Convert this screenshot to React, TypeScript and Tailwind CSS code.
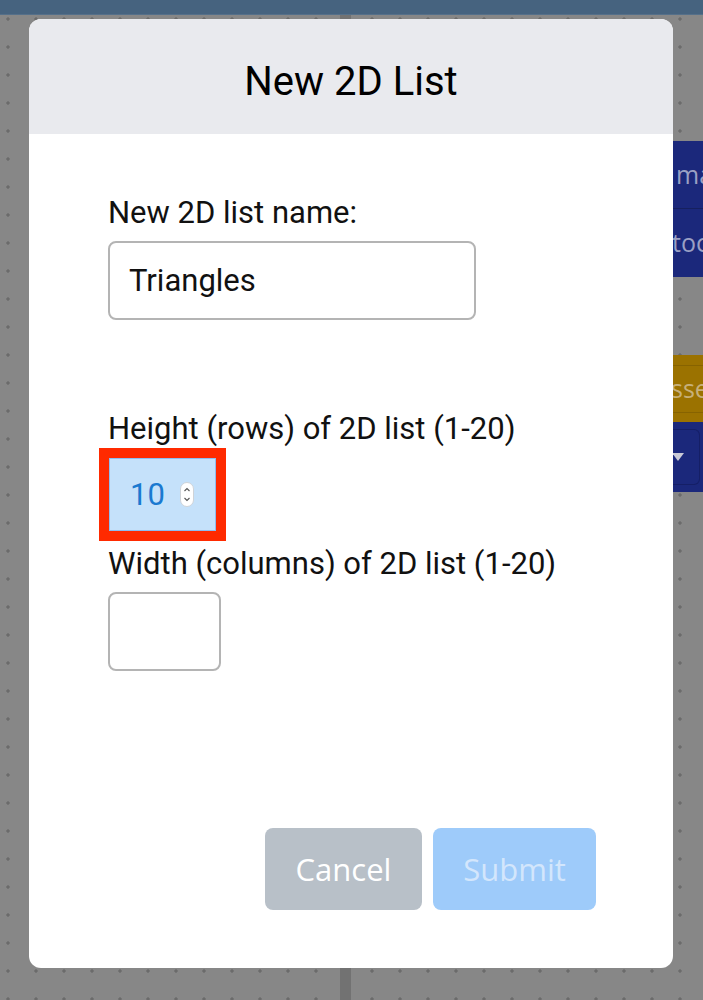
import React from "react";

const roboto = { fontFamily: "Roboto, 'Liberation Sans', sans-serif" };

function Spinner() {
  return (
    <svg width="14" height="25" viewBox="0 0 14 25" className="ml-[15px]">
      <rect x="0.5" y="0.5" width="13" height="24" rx="6.5" fill="#ffffff" stroke="#cfd3d8" />
      <path d="M4.5 9 L7 6.5 L9.5 9" fill="none" stroke="#555" strokeWidth="1.1" />
      <path d="M4.5 16 L7 18.5 L9.5 16" fill="none" stroke="#555" strokeWidth="1.1" />
    </svg>
  );
}

export default function App() {
  return (
    <div className="relative w-[703px] h-[1000px] overflow-hidden bg-[#878787] bg-[radial-gradient(circle,#6b6b6b_1.4px,transparent_1.9px)] bg-[length:28px_28px] bg-[position:-6px_5px]">
      <div className="h-[15px] bg-[#46637f] border-b border-[#55708a]" />
      <div className="flex h-[985px]">
        <div className="w-[340px]" />
        <div className="w-[11px] bg-[#727272]" />
        <div className="w-[322px]" />
        <div className="flex-1 flex flex-col pt-[126px] overflow-hidden text-[25px] text-[#9aa0c4]" style={{ fontFamily: "'Open Sans', sans-serif" }}>
          <div className="h-[68px] bg-[#1b287b] border-b border-[#16205f] flex items-center pl-[3px] whitespace-nowrap">ma</div>
          <div className="h-[68px] bg-[#1b287b] flex items-center ml-[-1px] whitespace-nowrap">toc</div>
          <div className="h-[78px]" />
          <div className="h-[67px] bg-[#9b7200] flex flex-col">
            <div className="h-[11px] border-b border-[#876300]" />
            <div className="flex-1 flex items-center ml-[-2px] whitespace-nowrap text-[#c7b07a]">sse</div>
            <div className="h-[10px] border-t border-[#876300]" />
          </div>
          <div className="h-[70px] bg-[#1b287b] flex items-center py-[6px]">
            <div className="h-[56px] w-[27px] border border-[#151f66] rounded-r-[6px] border-l-0 flex items-center">
              <svg width="12" height="8" viewBox="0 0 12 8" className="ml-[-1px]">
                <path d="M0 0 L12 0 L6 8 Z" fill="#c9cad6" />
              </svg>
            </div>
          </div>
        </div>
      </div>

      <div className="absolute left-[29px] top-[19px] w-[644px] h-[949px] rounded-[12px] overflow-hidden bg-white flex flex-col" style={roboto}>
        <div className="h-[115px] bg-[#e9eaee] flex items-center justify-center pt-[11px]">
          <h1 className="text-[40px] leading-none text-black">New 2D List</h1>
        </div>
        <div className="flex-1 flex flex-col pl-[79px] pr-[77px] pt-[61px] pb-[58px] text-[31px] leading-[36px] text-[#111]">
          <div>New 2D list name:</div>
          <input
            readOnly
            value="Triangles"
            className="mt-[10px] w-[368px] h-[79px] border-2 border-[#b4b4b4] rounded-[8px] px-[19px] text-[31px] text-[#111] outline-none"
            style={roboto}
          />
          <div className="mt-[91px]">Height (rows) of 2D list (1-20)</div>
          <div className="mt-[1px] ml-[-9px] self-start border-[10px] border-[#ff2a00]">
            <div className="w-[107px] h-[73px] bg-[#c5e1fa] border border-[#8ebdf0] flex items-center pl-[20px] text-[#1a79d0]">
              <span>10</span>
              <Spinner />
            </div>
          </div>
          <div className="mt-[5px]">Width (columns) of 2D list (1-20)</div>
          <input
            readOnly
            value=""
            className="mt-[10px] w-[113px] h-[79px] border-2 border-[#b4b4b4] rounded-[8px] outline-none"
          />
          <div className="flex-1" />
          <div className="flex justify-end gap-[11px] text-[31px]" style={{ fontFamily: "'Open Sans', sans-serif" }}>
            <button className="w-[157px] h-[82px] rounded-[8px] bg-[#b8c0c8] text-white">Cancel</button>
            <button className="w-[163px] h-[82px] rounded-[8px] bg-[#9ecbfa] text-[#d3e6fc]">Submit</button>
          </div>
        </div>
      </div>
    </div>
  );
}
